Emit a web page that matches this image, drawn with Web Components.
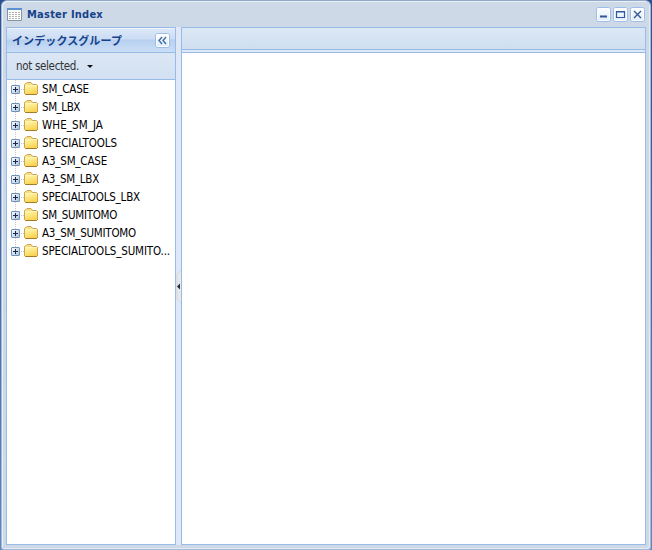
<!DOCTYPE html>
<html lang="ja"><head><meta charset="utf-8"><title>Master Index</title>
<style>
html,body{margin:0;height:100%;overflow:hidden;background:linear-gradient(#2c4f90,#6585bd)}
body{font:11.5px/14px "DejaVu Sans Condensed","DejaVu Sans","Noto Sans CJK JP",sans-serif}
</style></head><body>
<index-window></index-window>
<script>
const define=(name,html,init)=>customElements.define(name,class extends HTMLElement{
  connectedCallback(){
    if(this.shadowRoot)return;
    this.attachShadow({mode:'open'}).innerHTML=html;
    if(init)init(this,this.shadowRoot);
  }
});
// Single line label whose letter spacing is adjusted to a given width.
define('fit-label',`<style>:host{display:inline-block;white-space:nowrap;flex:none}span{display:inline-block}</style><span></span>`,(el,r)=>{
  const s=r.querySelector('span');
  s.textContent=el.getAttribute('text');
  const w=+el.getAttribute('fit'),n=s.textContent.length;
  s.style.letterSpacing=((w-s.getBoundingClientRect().width)/n)+'px';
});
define('tool-button',`<style>:host{display:block;width:15px;height:15px;flex:none}svg{display:block}</style>
<svg width="15" height="15" viewBox="0 0 15 15"><defs><linearGradient id="g" x2="0" y2="1"><stop stop-color="#fff"/><stop offset="1" stop-color="#dcecfb"/></linearGradient></defs>
<rect x=".5" y=".5" width="14" height="14" rx="2" fill="url(#g)" stroke="#9cbde7"/><rect x="1.5" y="1.5" width="12" height="12" rx="1" fill="none" stroke="#fff"/><path fill="none"/></svg>`,(el,r)=>{
  const p=r.querySelector('path'),k=el.getAttribute('kind');
  p.setAttribute('d',{min:'M4 9.5h7',max:'M3.5 4.5h8v6h-8zM3 5h9',close:'M4 4l7 7M11 4l-7 7',collapse:'M7 4L4 7.5 7 11M11 4L8 7.5 11 11'}[k]);
  p.setAttribute('stroke',k==='collapse'?'#416da3':'#35569c');
  p.setAttribute('stroke-width',k==='min'?2:k==='max'?1.2:1.4);
});
define('tree-node',`<style>
:host{display:flex;height:18px;align-items:center;color:#000}
.elbow{width:16px;height:18px;flex:none}
.folder{width:16px;height:16px;margin:0 3px 0 -1px;flex:none}
fit-label{padding-bottom:1px}
</style>
<svg class="elbow" viewBox="0 0 16 18"><path d="M7.5 0v5M7.5 14v4M13 9.5h3" stroke="#c5c5cb" stroke-dasharray="1 1"/><path id="end" d="M7 14h1v4H7z" fill="#fff" visibility="hidden"/>
<defs><linearGradient id="b" x2="1" y2="1"><stop stop-color="#fff"/><stop offset="1" stop-color="#a9c0d8"/></linearGradient></defs>
<rect x="3.5" y="5.5" width="8" height="8" rx=".5" fill="url(#b)" stroke="#6f92ba"/><path d="M5 9.5h5M7.5 7v5" stroke="#18284b"/></svg>
<svg class="folder" viewBox="0 0 16 16"><defs><linearGradient id="f" x2=".4" y2="1"><stop stop-color="#fff8b0"/><stop offset="1" stop-color="#f9d350"/></linearGradient></defs>
<path d="M1.5 12.5v-9l1-1H3l1-1h4l1.5 2h4l1 1v8l-1 1h-11z" fill="#f6df83" stroke="#c9a455"/><path d="M1.5 4.5h13v8l-1 1h-11l-1-1z" fill="url(#f)" stroke="#c9a455"/><path d="M2 4.5h12" stroke="#fff3b6"/><path d="M2.5 13.5h11l1-1" fill="none" stroke="#a57a28"/></svg>
<fit-label></fit-label>`,(el,r)=>{
  if(el.hasAttribute('last'))r.querySelector('#end').setAttribute('visibility','visible');
  const old=r.querySelector('fit-label'),l=document.createElement('fit-label');
  l.setAttribute('text',el.getAttribute('text'));l.setAttribute('fit',el.getAttribute('fit'));
  old.replaceWith(l);
});
define('group-panel',`<style>
:host{display:flex;flex-direction:column;box-sizing:border-box;width:170px;border:1px solid #99bbe8;background:#fff;flex:none}
header{display:flex;align-items:center;justify-content:space-between;height:25px;box-sizing:border-box;padding:0 5px 0 5px;border-bottom:1px solid #99bbe8;background:linear-gradient(#edf4fd 0 1px,#dce8f8 1px,#cbdcf3 11px,#b8d0ef 12px,#cadef7 24px);color:#15428b;font:bold 11px/14px "Noto Sans CJK JP",sans-serif}
nav{display:flex;align-items:center;height:27px;box-sizing:border-box;padding-left:9px;border-bottom:1px solid #99bbe8;background:linear-gradient(#dce7f5,#d2e0f1);color:#333}
nav i{margin:1px 0 0 8px;border:3px solid transparent;border-top-color:#111;border-bottom:0}
section{padding:0 0 0 1px}
</style><header><fit-label text="インデックスグループ" fit="110"></fit-label><tool-button kind="collapse"></tool-button></header>
<nav><fit-label text="not selected." fit="63"></fit-label><i></i></nav><section><slot></slot></section>`);
define('split-bar',`<style>:host{display:flex;align-items:center;width:5px;background:#dfe8f6;flex:none}svg{display:block}</style>
<svg width="5" height="35" viewBox="0 0 5 35"><path d="M5 0v1L1 5v25l4 4v1" fill="#e8e9e7" stroke="#cbd3dc" stroke-width=".7"/><path d="M4 14.5v6L1 17.5z" fill="#222b36"/></svg>`);
define('content-panel',`<style>
:host{display:flex;flex:1;flex-direction:column;border:1px solid #99bbe8;background:#fff;min-width:0}
.bar{height:21px;border-bottom:1px solid #99bbe8;background:linear-gradient(#dce8f5,#cfdef0)}
.gap{height:2px;background:#dfe8f6;border-bottom:1px solid #99bbe8}
</style><div class="bar"></div><div class="gap"></div>`);
define('index-window',`<style>
:host{display:flex;flex-direction:column;box-sizing:border-box;width:650px;height:550px;margin-left:1px;border:1px solid #a2b9d8;border-top-color:#91a8c7;border-radius:6px 6px 3px 3px;padding:0 4px 4px;background:#ced9e7;box-shadow:inset 1px 1px #e8eff8,inset -1px -1px #e3ebf5}
header{display:flex;align-items:center;height:26px;padding:0 1px;box-sizing:border-box;color:#15428b;font-weight:bold;font-size:11px}
header fit-label{margin-top:1px}
header svg{margin:1px 5px 0 0;flex:none}
.tools{display:flex;gap:2px;margin-left:auto}
main{display:flex;flex:1;min-height:0}
</style><header><svg width="15" height="13" viewBox="0 0 15 13"><path d="M.5.5h14v12H.5z" fill="#fff" stroke="#8095a9"/><path d="M0 0h15v2H0z" fill="#5c91d0"/><path d="M2 4.5h12M2 6.5h12M2 8.5h12M2 10.5h12" stroke="#b3b1ad" stroke-dasharray="2 1"/></svg>
<fit-label text="Master Index" fit="76"></fit-label><div class="tools"><tool-button kind="min"></tool-button><tool-button kind="max"></tool-button><tool-button kind="close"></tool-button></div></header>
<main><group-panel>
<tree-node text="SM_CASE" fit="47"></tree-node><tree-node text="SM_LBX" fit="38"></tree-node><tree-node text="WHE_SM_JA" fit="61"></tree-node><tree-node text="SPECIALTOOLS" fit="75"></tree-node><tree-node text="A3_SM_CASE" fit="65"></tree-node><tree-node text="A3_SM_LBX" fit="57"></tree-node><tree-node text="SPECIALTOOLS_LBX" fit="98"></tree-node><tree-node text="SM_SUMITOMO" fit="75"></tree-node><tree-node text="A3_SM_SUMITOMO" fit="94"></tree-node><tree-node last text="SPECIALTOOLS_SUMITO..." fit="128"></tree-node>
</group-panel><split-bar></split-bar><content-panel></content-panel></main>`);
</script></body></html>
